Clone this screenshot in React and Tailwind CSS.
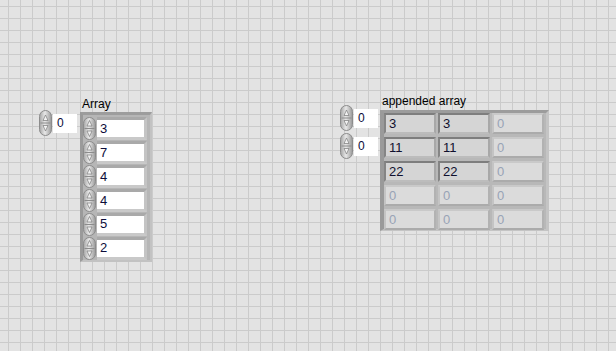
import React from 'react'

const font = { fontFamily: '"Liberation Sans", Arial, sans-serif' }

function Spinner({ h = 25 }) {
  const mid = h / 2
  return (
    <svg width="13" height={h} viewBox={`0 0 13 ${h}`} className="block shrink-0">
      <defs>
        <linearGradient id="spin" x1="0" x2="1" y1="0" y2="0">
          <stop offset="0" stopColor="#a4a4a4" />
          <stop offset="0.45" stopColor="#e8e8e8" />
          <stop offset="1" stopColor="#989898" />
        </linearGradient>
      </defs>
      <rect x="0.5" y="0.5" width="12" height={h - 1} rx="6" fill="url(#spin)" stroke="#8c8c8c" />
      <line x1="1.5" x2="11.5" y1={mid} y2={mid} stroke="#8c8c8c" strokeWidth="1" />
      <path d={`M6.5 ${mid - 8} L9 ${mid - 2.5} L4 ${mid - 2.5} Z`} fill="#f2f2f2" stroke="#7a7a7a" strokeWidth="0.7" />
      <path d={`M6.5 ${mid + 8} L9 ${mid + 2.5} L4 ${mid + 2.5} Z`} fill="#f2f2f2" stroke="#7a7a7a" strokeWidth="0.7" />
    </svg>
  )
}

function IndexControl() {
  return (
    <div className="flex items-center gap-[1px]">
      <Spinner h={26} />
      <div className="flex h-[19px] w-[24px] items-center bg-white pl-[4px] text-[12px] text-[#0c0c3a]">0</div>
    </div>
  )
}

function Element({ value }) {
  return (
    <div className="flex h-[24px] items-center">
      <Spinner h={23} />
      <div className="ml-[1px] flex h-[23px] w-[50px] items-center border-t-[3px] border-r-[3px] border-b-[3px] border-t-[#a9a9a9] border-r-[#c4c4c4] border-b-[#c9c9c9] bg-white pl-[3px] text-[13px] text-[#0c0c3a]">
        {value}
      </div>
    </div>
  )
}

function Cell({ value, on }) {
  return on ? (
    <div className="flex h-[21px] w-[52px] items-center border-t-2 border-l-2 border-b-2 border-r-2 border-t-[#7e7e7e] border-l-[#858585] border-b-[#bcbcbc] border-r-[#a8a8a8] bg-[#d5d5d5] pl-[3px] text-[13px] text-[#10102e]">
      {value}
    </div>
  ) : (
    <div className="flex h-[21px] w-[52px] items-center border-t-2 border-l-2 border-b-2 border-r-2 border-t-[#c9c9c9] border-l-[#c4c4c4] border-b-[#ababab] border-r-[#b2b2b2] bg-[#dbdbdb] pl-[3px] text-[13px] text-[#98a3b6]">
      {value}
    </div>
  )
}

const oneD = [3, 7, 4, 4, 5, 2]
const twoD = [
  [3, 3, 0],
  [11, 11, 0],
  [22, 22, 0],
  [0, 0, 0],
  [0, 0, 0],
]

export default function App() {
  return (
    <div
      className="relative h-[351px] w-[616px] overflow-hidden bg-[#e3e3e3] bg-[linear-gradient(to_right,#cbcbcb_1px,transparent_1px),linear-gradient(to_bottom,#cbcbcb_1px,transparent_1px)] bg-[size:12px_12px] bg-[position:8px_6px]"
      style={font}
    >
      {/* Array */}
      <div className="absolute left-[39px] top-[110px]">
        <IndexControl />
      </div>
      <div className="absolute left-[82px] top-[95px] text-[12px] text-black">Array</div>
      <div className="absolute left-[80px] top-[112px] flex h-[150px] w-[72px] flex-col border-t-[3px] border-l-[3px] border-r-[2px] border-b-[2px] border-t-[#9d9d9d] border-l-[#9a9a9a] border-r-[#c2c2c2] border-b-[#c2c2c2] bg-[#b6b6b6] pt-[2px]">
        {oneD.map((v, i) => (
          <Element key={i} value={v} />
        ))}
      </div>

      {/* appended array */}
      <div className="absolute left-[340px] top-[105px] flex flex-col gap-[2px]">
        <IndexControl />
        <IndexControl />
      </div>
      <div className="absolute left-[382px] top-[92px] text-[12px] text-black">appended array</div>
      <div className="absolute left-[380px] top-[110px] flex h-[121px] w-[169px] flex-col gap-[3px] border-t-[3px] border-l-[4px] border-r-[3px] border-b-[2px] border-t-[#9c9c9c] border-l-[#9a9a9a] border-r-[#c4c4c4] border-b-[#c4c4c4] bg-[#b8b8b8]">
        {twoD.map((row, r) => (
          <div key={r} className="flex gap-[2px]">
            {row.map((v, c) => (
              <Cell key={c} value={v} on={r < 3 && c < 2} />
            ))}
          </div>
        ))}
      </div>
    </div>
  )
}
